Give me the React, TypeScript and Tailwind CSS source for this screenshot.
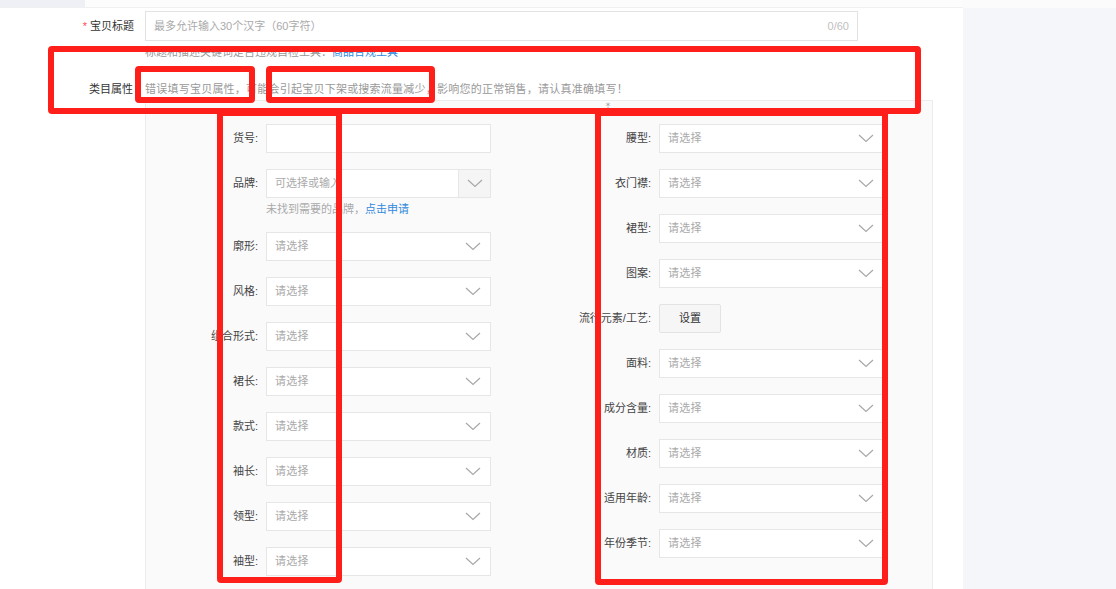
import React from "react";

const Chevron = () => (
  <svg width="16" height="9" viewBox="0 0 16 9" fill="none">
    <polyline points="1,1 8,7.5 15,1" stroke="#a8a8a8" strokeWidth="1.2" />
  </svg>
);

const Select = ({ text = "请选择" }: { text?: string }) => (
  <div className="flex h-[29px] w-[225px] items-center justify-between border border-[#e6e6e6] bg-white pl-[8px] pr-[9px]">
    <span className="text-[11px] tracking-[0.3px] text-[#aaaaaa]">{text}</span>
    <Chevron />
  </div>
);

const Row = ({ label, labelW, children }: { label: string; labelW: string; children: React.ReactNode }) => (
  <div className="flex items-start">
    <div className={`${labelW} h-[29px] flex items-center justify-end pr-[8px] text-[11px] text-[#444] whitespace-nowrap`}>{label}</div>
    {children}
  </div>
);

export default function App() {
  const leftRows = ["廓形:", "风格:", "组合形式:", "裙长:", "款式:", "袖长:", "领型:", "袖型:"];
  const rightRows = ["腰型:", "衣门襟:", "裙型:", "图案:"];
  const rightRows2 = ["面料:", "成分含量:", "材质:", "适用年龄:", "年份季节:"];
  return (
    <div className="relative flex h-[589px] w-[1116px] overflow-hidden bg-white font-['Liberation_Sans','Noto_Sans_CJK_SC',sans-serif]">
      {/* main */}
      <div className="flex w-[963px] flex-col bg-white">
        <div className="flex h-[8px] border-b border-[#f0f0f0]">
          <div className="w-[85px] bg-[#eef0f5]" />
          <div className="flex-1 bg-[#fcfcfc]" />
        </div>
        {/* title */}
        <div className="mt-[3px] flex items-center">
          <div className="flex w-[145px] items-center justify-end pr-[11px] text-[11px] text-[#333]">
            <span className="mr-[3px] text-[#ff4d4f]">*</span>宝贝标题
          </div>
          <div className="flex h-[30px] w-[713px] items-center justify-between border border-[#e3e3e3] px-[8px] text-[11px] text-[#aaaaaa]">
            <span>最多允许输入30个汉字（60字符）</span>
            <span className="text-[#c0c0c0]">0/60</span>
          </div>
        </div>
        <div className="mt-[4px] pl-[145px] text-[11px] leading-[14px] text-[#999]">
          标题和描述关键词是否违规自检工具：<span className="text-[#3089dc]">商品合规工具</span>
        </div>
        {/* category */}
        <div className="mt-[22px] flex items-center">
          <div className="w-[145px] pr-[12px] text-right text-[11px] text-[#333]">类目属性</div>
          <div className="text-[11px] tracking-[0.23px] text-[#999]">
            错误填写宝贝属性，可能会引起宝贝下架或搜索流量减少，影响您的正常销售，请认真准确填写！
          </div>
        </div>
        {/* panel */}
        <div className="ml-[145px] mt-[2px] flex w-[788px] flex-1 border-x border-t border-[#ececec] bg-[#fafafb] pl-[31px] pt-[23px]">
          <div className="flex flex-col gap-[16px]">
            <Row label="货号:" labelW="w-[89px]">
              <div className="h-[29px] w-[225px] border border-[#e6e6e6] bg-white" />
            </Row>
            <div className="flex items-start">
              <div className="flex h-[29px] w-[89px] items-center justify-end pr-[8px] text-[11px] text-[#444]">品牌:</div>
              <div className="flex flex-col">
                <div className="flex h-[29px] w-[225px] border border-[#e6e6e6] bg-white">
                  <div className="flex flex-1 items-center pl-[8px] text-[11px] text-[#aaaaaa]">可选择或输入</div>
                  <div className="flex w-[32px] items-center justify-center border-l border-[#e6e6e6] bg-[#f5f5f6]">
                    <Chevron />
                  </div>
                </div>
                <div className="mt-[4px] h-[14px] text-[11px] leading-[14px] text-[#aaa]">
                  未找到需要的品牌，<span className="text-[#3089dc]">点击申请</span>
                </div>
              </div>
            </div>
            {leftRows.map((l) => (
              <Row key={l} label={l} labelW="w-[89px]">
                <Select />
              </Row>
            ))}
          </div>
          <div className="ml-[77px] flex flex-col gap-[16px]">
            {rightRows.map((l) => (
              <Row key={l} label={l} labelW="w-[91px]">
                <Select />
              </Row>
            ))}
            <Row label="流行元素/工艺:" labelW="w-[91px]">
              <div className="flex h-[29px] w-[62px] items-center justify-center rounded-[2px] border border-[#e3e3e3] bg-[#f6f6f7] text-[11px] text-[#333]">
                设置
              </div>
            </Row>
            {rightRows2.map((l) => (
              <Row key={l} label={l} labelW="w-[91px]">
                <Select />
              </Row>
            ))}
          </div>
        </div>
      </div>
      {/* right side */}
      <div className="flex flex-1 flex-col bg-[#f5f6fa]">
        <div className="h-[8px] bg-[#fbfbfb]" />
      </div>

      {/* cursor mark */}
      <div className="absolute left-[603px] top-[103px] text-[10px] leading-[10px] text-[#888]">⁑</div>

      {/* red annotation boxes */}
      <div className="absolute left-[48px] top-[46px] h-[68px] w-[873px] rounded-[4px] border-[6px] border-[#fe1f1a]" />
      <div className="absolute left-[135px] top-[66px] h-[37px] w-[120px] rounded-[4px] border-[6px] border-[#fe1f1a]" />
      <div className="absolute left-[266px] top-[66px] h-[37px] w-[169px] rounded-[4px] border-[6px] border-[#fe1f1a]" />
      <div className="absolute left-[217px] top-[110px] h-[473px] w-[125px] rounded-[4px] border-[6px] border-[#fe1f1a]" />
      <div className="absolute left-[595px] top-[110px] h-[475px] w-[293px] rounded-[4px] border-[6px] border-[#fe1f1a]" />
    </div>
  );
}
